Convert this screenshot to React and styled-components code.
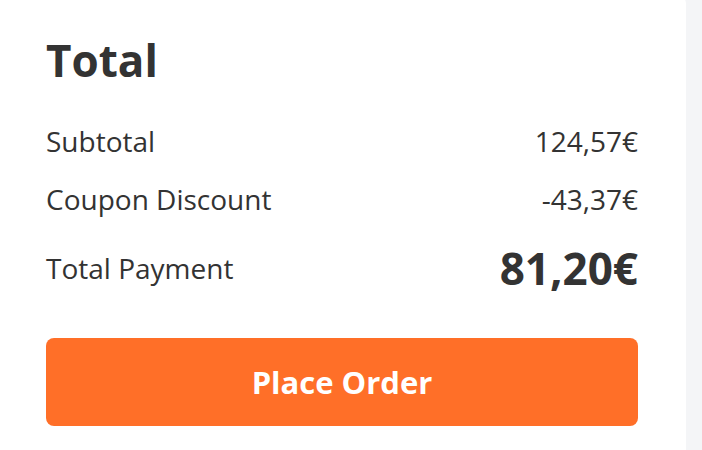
import React from 'react'
import styled, { createGlobalStyle } from 'styled-components'

const GlobalStyle = createGlobalStyle`
  html, body {
    margin: 0;
    padding: 0;
    background: #f4f5f7;
  }
  body {
    font-family: "Open Sans", "Noto Sans", sans-serif;
    color: #333;
  }
`

const rows = [
  { label: 'Subtotal', value: '124,57€' },
  { label: 'Coupon Discount', value: '-43,37€' },
]

const App = () => (
  <Page>
    <GlobalStyle />
    <Card>
      <Title>Total</Title>
      <Lines>
        {rows.map((row) => (
          <Row key={row.label}>
            <Label>{row.label}</Label>
            <Value>{row.value}</Value>
          </Row>
        ))}
      </Lines>
      <TotalRow>
        <Label>Total Payment</Label>
        <Value big>81,20€</Value>
      </TotalRow>
      <OrderButton>Place Order</OrderButton>
    </Card>
  </Page>
)

const Page = styled.div`
  height: 450px;
  overflow: hidden;
`

const Card = styled.section`
  width: 686px;
  box-sizing: border-box;
  margin-top: -6px;
  padding: 38px 48px 40px 46px;
  min-height: 500px;
  background: #fff;
  border-radius: 0 10px 0 0;
  display: flex;
  flex-direction: column;
`

const Title = styled.h1`
  margin: 0;
  font-size: 44px;
  line-height: 56px;
  font-weight: 700;
  color: #333;
`

const Lines = styled.div`
  margin-top: 33px;
  display: flex;
  flex-direction: column;
  gap: 18px;
`

const Row = styled.div`
  display: flex;
  justify-content: space-between;
  align-items: center;
`

const TotalRow = styled(Row)`
  margin-top: 21px;
`

const Label = styled.span`
  font-size: 28px;
  line-height: 40px;
  color: #333;
`

const Value = styled.span`
  font-size: ${(p) => (p.big ? '44px' : '28px')};
  line-height: ${(p) => (p.big ? '56px' : '40px')};
  font-weight: ${(p) => (p.big ? 700 : 400)};
  color: #333;
`

const OrderButton = styled.button`
  margin-top: 42px;
  height: 88px;
  border: none;
  border-radius: 8px;
  background: #ff6f28;
  color: #fff;
  font-family: "Open Sans", "Noto Sans", sans-serif;
  font-size: 31px;
  font-weight: 700;
  cursor: pointer;
`

export default App
